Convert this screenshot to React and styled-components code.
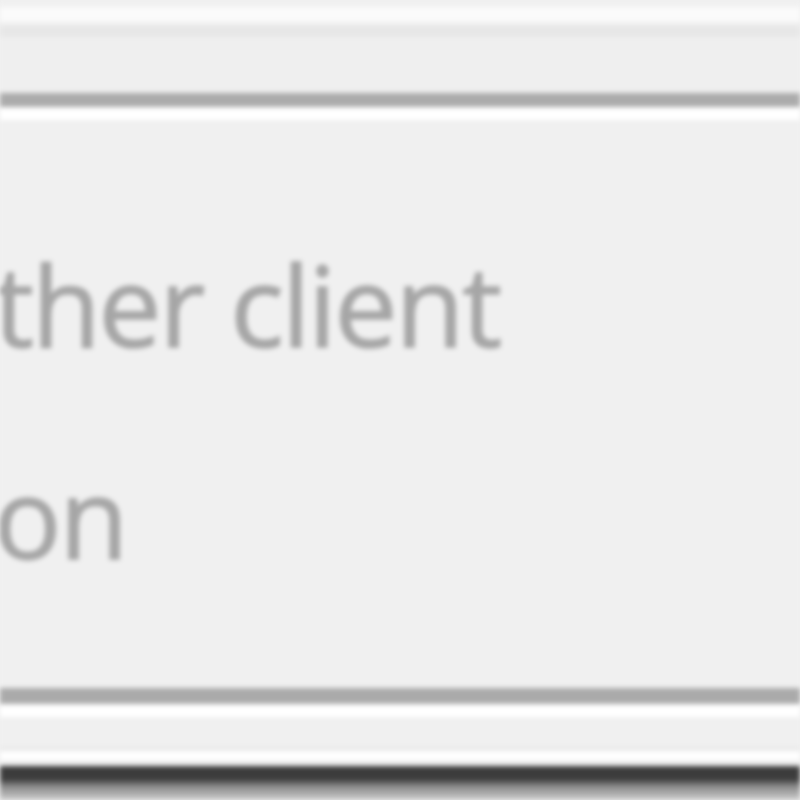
import React from 'react';
import styled, { createGlobalStyle } from 'styled-components';

const GlobalStyle = createGlobalStyle`
  html, body {
    margin: 0;
    padding: 0;
    background: #f0f0f0;
    overflow: hidden;
  }
`;

const Window = styled.div`
  width: 800px;
  height: 800px;
  display: flex;
  flex-direction: column;
  background: #f0f0f0;
  overflow: hidden;
  filter: blur(2.5px);
`;

const Toolbar = styled.div`
  height: 93px;
  flex: none;
  background: linear-gradient(
    to bottom,
    #f0f0f0 0 7px,
    #fbfbfb 7px 21px,
    #f3f3f3 21px 25px,
    #e7e7e7 25px 37px,
    #efefef 37px
  );
`;

const Panel = styled.div`
  flex: 1;
  display: flex;
  flex-direction: column;
  border-top: 14px solid #ababab;
  border-bottom: 16px solid #aaaaaa;
`;

const Content = styled.div`
  flex: 1;
  border-top: 13px solid #ffffff;
  background: #f0f0f0;
  padding-top: 78px;
  overflow: hidden;
`;

const Message = styled.p`
  margin: 0 0 0 -6px;
  font-family: 'Open Sans', 'Noto Sans', sans-serif;
  font-size: 112px;
  line-height: 212px;
  letter-spacing: -2px;
  color: #a6a6a6;
  -webkit-text-stroke: 1.5px #a6a6a6;
  white-space: pre;
`;

const Footer = styled.div`
  height: 96px;
  flex: none;
  display: flex;
  flex-direction: column;
`;

const Highlight = styled.div`
  height: ${p => p.$h}px;
  background: ${p => p.$c};
  flex: none;
`;

const Edge = styled.div`
  flex: 1;
  background: linear-gradient(to bottom, #3c3c3c 0 13px, #888888 20px, #cccccc 100%);
`;

export default function App() {
  return (
    <>
      <GlobalStyle />
      <Window>
        <Toolbar />
        <Panel>
          <Content>
            <Message>{'ther client\non'}</Message>
          </Content>
        </Panel>
        <Footer>
          <Highlight $h={13} $c="#ffffff" />
          <Highlight $h={30} $c="#f0f0f0" />
          <Highlight $h={4} $c="#e8e8e8" />
          <Highlight $h={9} $c="#ffffff" />
          <Highlight $h={6} $c="#f0f0f0" />
          <Edge />
        </Footer>
      </Window>
    </>
  );
}
